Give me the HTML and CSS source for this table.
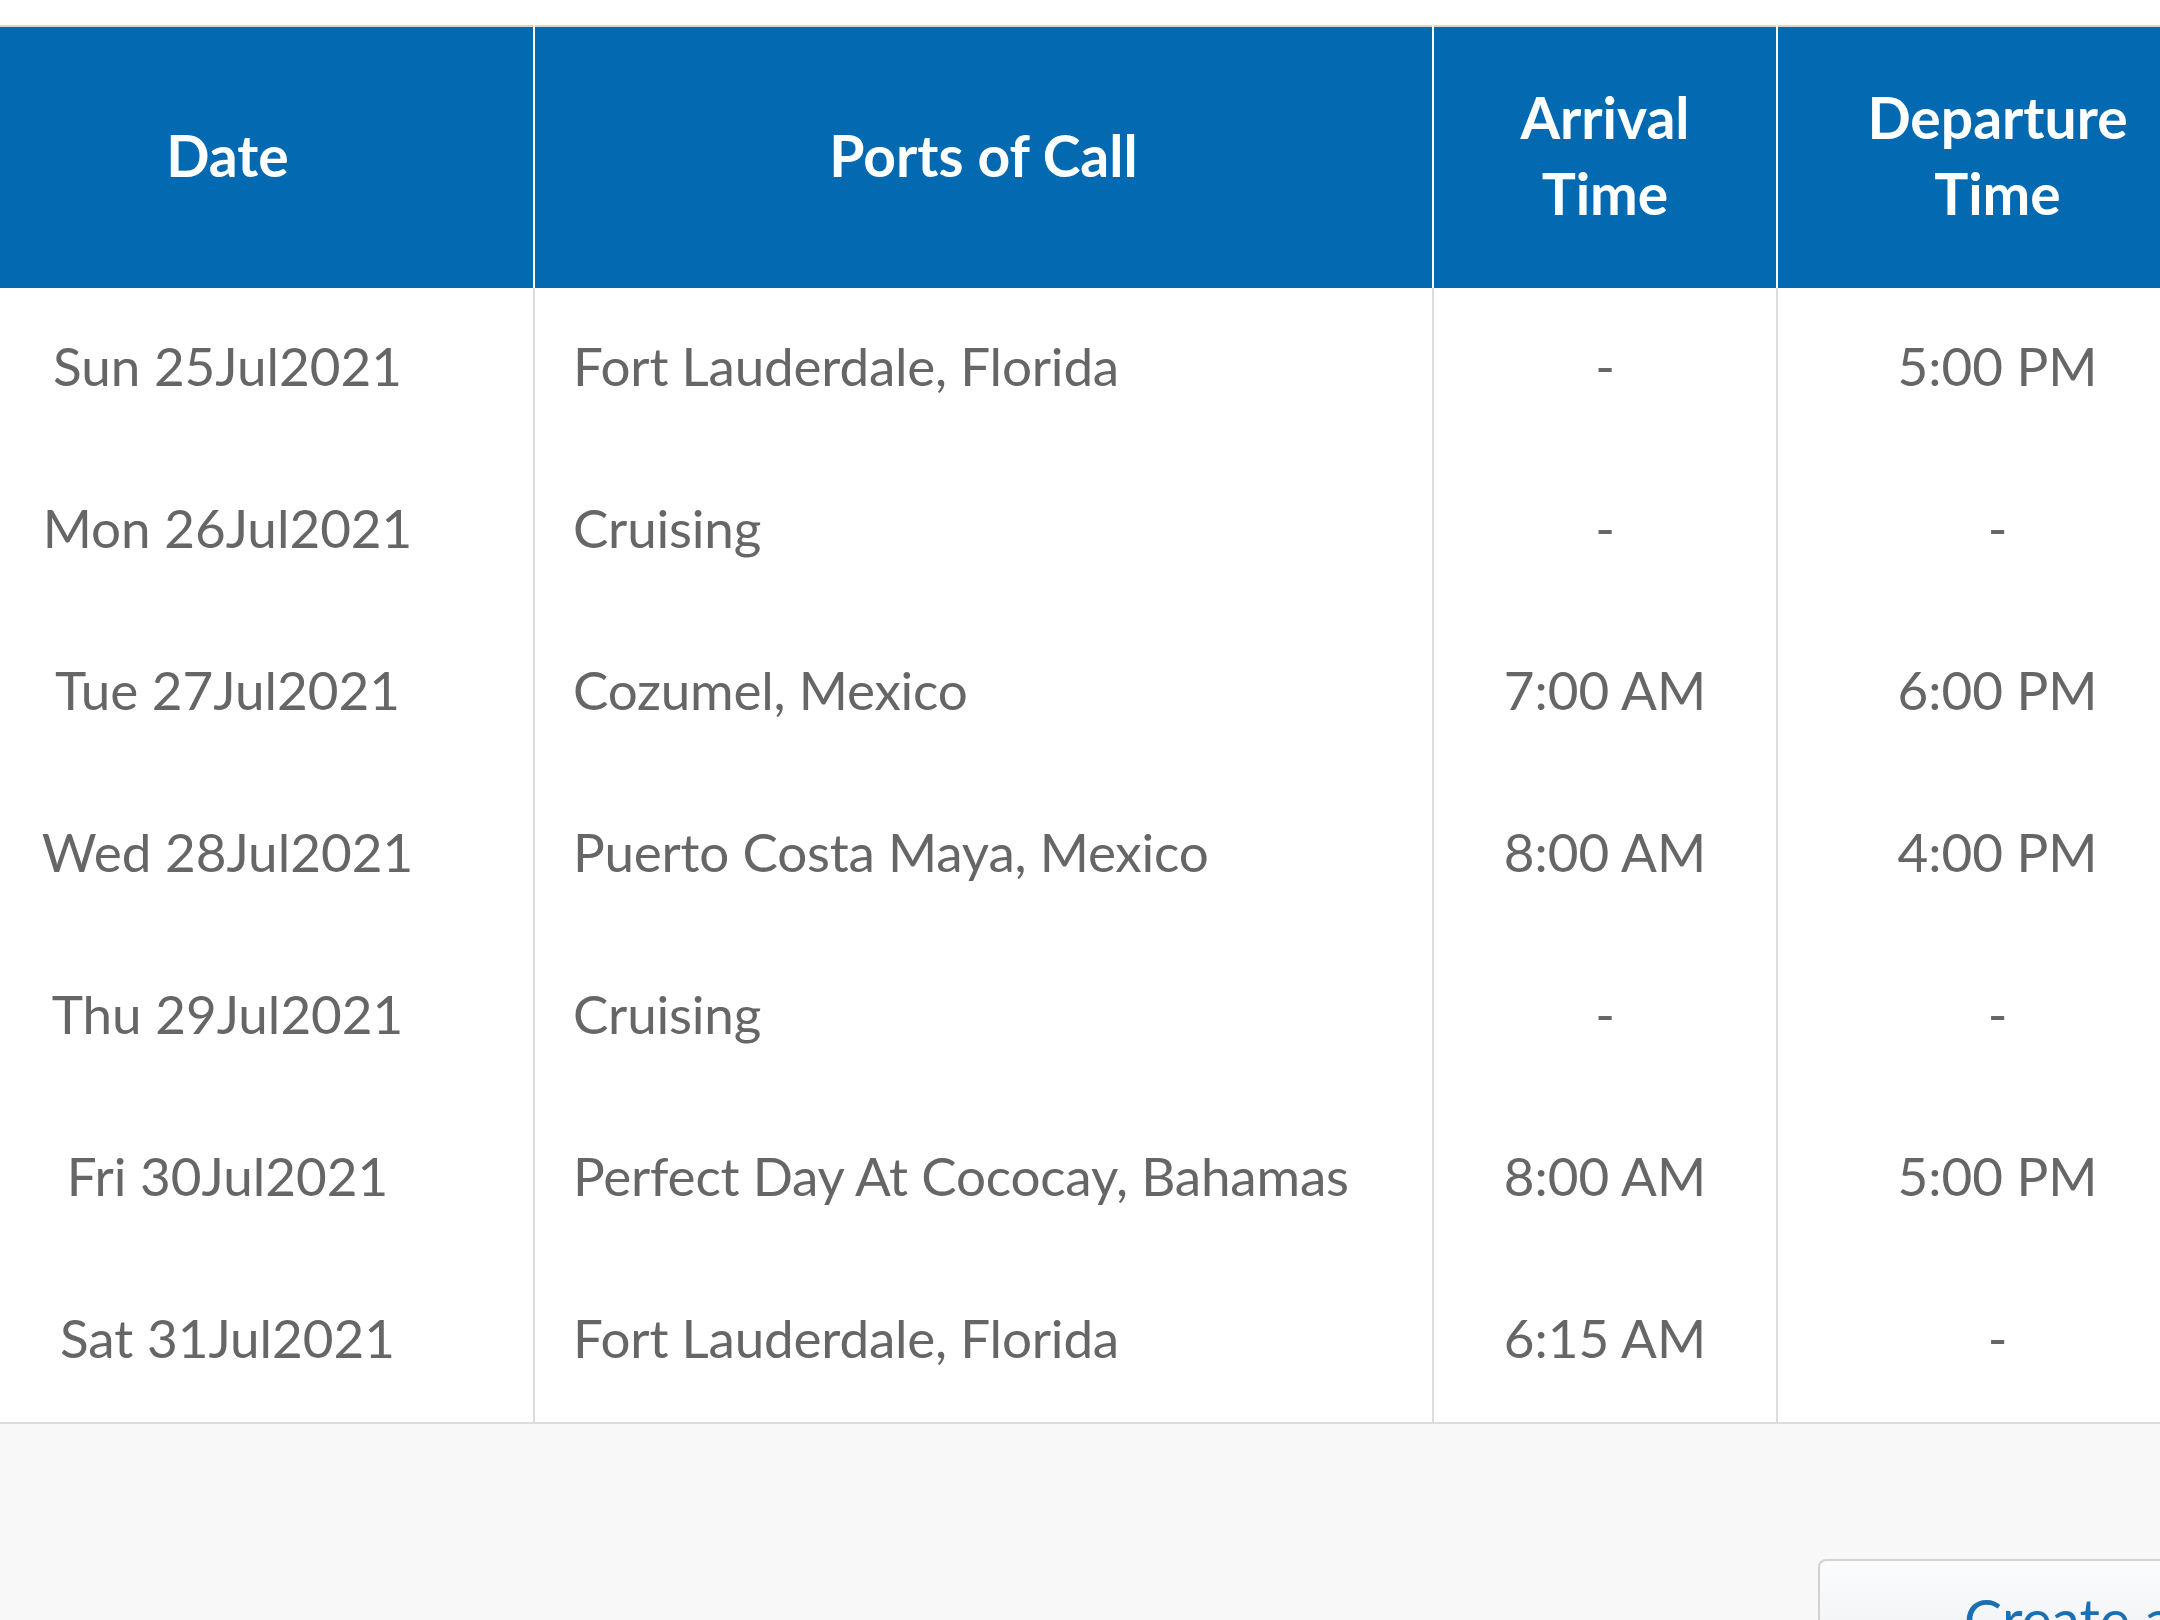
FILE: index.html
```html
<!DOCTYPE html>
<html lang="en">
<head>
<meta charset="utf-8">
<title>Itinerary</title>
<link rel="stylesheet" href="styles.css">
</head>
<body>
<div class="page">
  <div class="sheet">
    <table class="itinerary">
      <colgroup>
        <col class="c-date">
        <col class="c-port">
        <col class="c-arr">
        <col class="c-dep">
      </colgroup>
      <thead>
        <tr>
          <th>Date</th>
          <th>Ports of Call</th>
          <th>Arrival<br>Time</th>
          <th>Departure<br>Time</th>
        </tr>
      </thead>
      <tbody>
        <tr><td>Sun 25Jul2021</td><td class="port">Fort Lauderdale, Florida</td><td>-</td><td>5:00 PM</td></tr>
        <tr><td>Mon 26Jul2021</td><td class="port">Cruising</td><td>-</td><td>-</td></tr>
        <tr><td>Tue 27Jul2021</td><td class="port">Cozumel, Mexico</td><td>7:00 AM</td><td>6:00 PM</td></tr>
        <tr><td>Wed 28Jul2021</td><td class="port">Puerto Costa Maya, Mexico</td><td>8:00 AM</td><td>4:00 PM</td></tr>
        <tr><td>Thu 29Jul2021</td><td class="port">Cruising</td><td>-</td><td>-</td></tr>
        <tr><td>Fri 30Jul2021</td><td class="port">Perfect Day At Cococay, Bahamas</td><td>8:00 AM</td><td>5:00 PM</td></tr>
        <tr><td>Sat 31Jul2021</td><td class="port">Fort Lauderdale, Florida</td><td>6:15 AM</td><td>-</td></tr>
      </tbody>
    </table>
    <div class="footer">
      <button class="btn" type="button">Create a Quote</button>
    </div>
  </div>
</div>
</body>
</html>
```

FILE: styles.css
```css
html, body {
  margin: 0;
  padding: 0;
  background: #ffffff;
  overflow: hidden;
}
body {
  width: 2160px;
  height: 1620px;
  font-family: Lato, "Open Sans", sans-serif;
}
.page {
  width: 2160px;
  height: 1620px;
  overflow: hidden;
  padding-top: 25px;
  box-sizing: border-box;
}
.sheet {
  width: 2295px;
  margin-left: -78px;
}
.itinerary {
  width: 2295px;
  table-layout: fixed;
  border-collapse: collapse;
  border-top: 2px solid #d6d6d6;
  border-bottom: 2px solid #dcdcdc;
}
.c-date { width: 612px; }
.c-port { width: 899px; }
.c-arr { width: 344px; }
.c-dep { width: 440px; }
.itinerary th {
  background: #0369b1;
  color: #ffffff;
  font-weight: 700;
  font-size: 57px;
  line-height: 76px;
  height: 256px;
  padding: 0 0 5px 0;
  text-align: center;
  vertical-align: middle;
  border-left: 2px solid #ffffff;
}
.itinerary th:first-child { border-left: none; }
.itinerary td {
  height: 154px;
  padding: 0 0 8px 0;
  text-align: center;
  vertical-align: middle;
  font-size: 53px;
  color: #666666;
  border-left: 2px solid #dcdcdc;
  white-space: nowrap;
}
.itinerary td:first-child { border-left: none; }
.itinerary td.port {
  text-align: left;
  padding-left: 38px;
  letter-spacing: -0.2px;
}
.footer {
  background: #f8f8f8;
  height: 400px;
  padding: 135px 0 0 1896px;
  box-sizing: border-box;
}
.btn {
  font-family: Lato, "Open Sans", sans-serif;
  font-size: 57px;
  line-height: 1.2;
  color: #1b6fb3;
  background: linear-gradient(#fbfcfd, #eceef1);
  border: 2px solid #d2d2d2;
  border-radius: 8px;
  padding: 23px 60px 30px 144px;
  white-space: nowrap;
  text-align: left;
}
```
